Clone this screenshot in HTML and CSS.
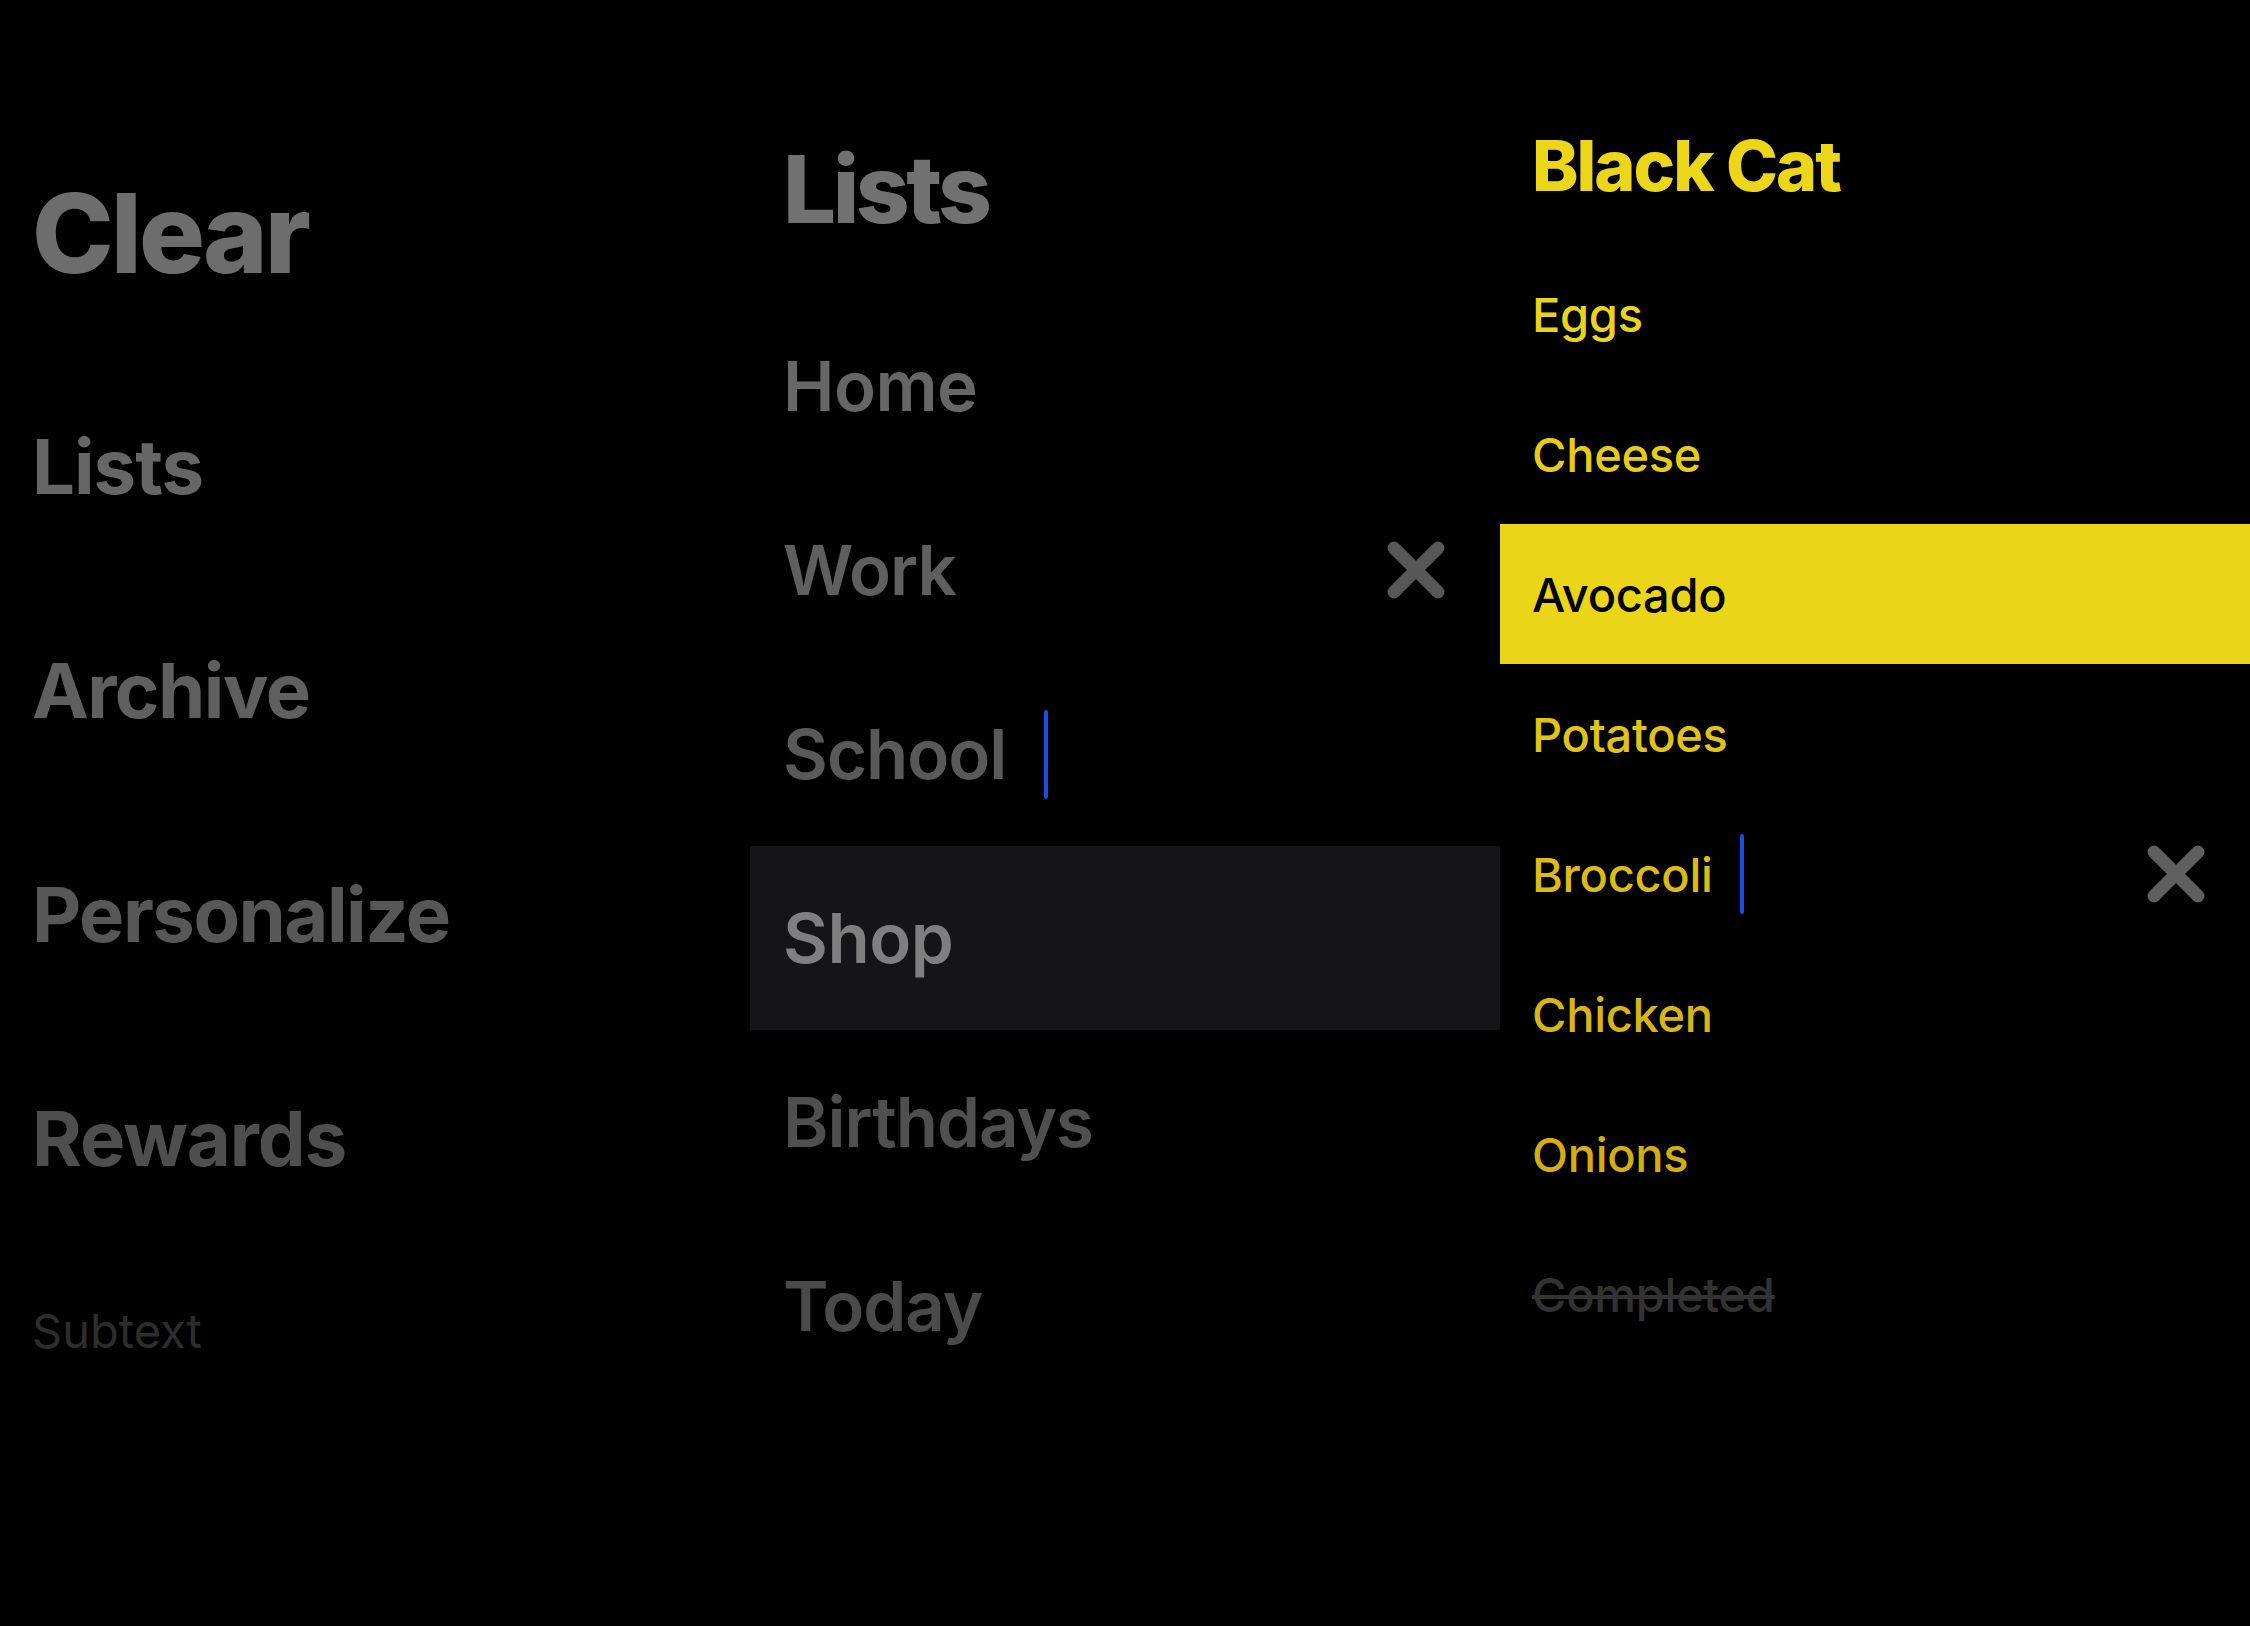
FILE: index.html
```html
<!DOCTYPE html>
<html lang="en">
<head>
    <meta charset="UTF-8">
    <meta name="viewport" content="width=device-width, initial-scale=1.0">
    <title>Clear</title>
    <link rel="stylesheet" href="styles.css">
</head>
<body>
    <div class="screens">
        <!-- main menu -->
        <section class="panel menu">
            <h1 class="app-title">Clear</h1>
            <ul class="menu-list">
                <li class="menu-item tone-1">Lists</li>
                <li class="menu-item tone-2">Archive</li>
                <li class="menu-item tone-3">Personalize</li>
                <li class="menu-item tone-4">Rewards</li>
            </ul>
            <p class="subtext">Subtext</p>
        </section>

        <!-- lists -->
        <section class="panel lists">
            <h2 class="lists-title">Lists</h2>
            <ul class="list-rows">
                <li class="list-row tone-1"><span class="label">Home</span></li>
                <li class="list-row tone-2">
                    <span class="label">Work</span>
                    <span class="close">
                        <svg width="58" height="58" viewBox="0 0 58 58"><path d="M7 7L51 51M51 7L7 51"/></svg>
                    </span>
                </li>
                <li class="list-row tone-3"><span class="label">School</span><span class="caret"></span></li>
                <li class="list-row active"><span class="label">Shop</span></li>
                <li class="list-row tone-4"><span class="label">Birthdays</span></li>
                <li class="list-row tone-5"><span class="label">Today</span></li>
            </ul>
        </section>

        <!-- items of one list -->
        <section class="panel items">
            <h2 class="items-title">Black Cat</h2>
            <ul class="item-rows">
                <li class="item-row y-1">Eggs</li>
                <li class="item-row y-2">Cheese</li>
                <li class="item-row selected">Avocado</li>
                <li class="item-row y-3">Potatoes</li>
                <li class="item-row y-4">
                    <span class="label">Broccoli</span><span class="caret"></span>
                    <span class="close">
                        <svg width="58" height="58" viewBox="0 0 58 58"><path d="M7 7L51 51M51 7L7 51"/></svg>
                    </span>
                </li>
                <li class="item-row y-5">Chicken</li>
                <li class="item-row y-6">Onions</li>
                <li class="item-row done">Completed</li>
            </ul>
        </section>
    </div>
</body>
</html>
```

FILE: styles.css
```css
body {
    margin: 0;
    padding: 0;
    background: #000;
    font-family: Inter, 'Noto Sans', sans-serif;
    color: #666;
}
ul {
    list-style: none;
    margin: 0;
    padding: 0;
}
h1, h2, p {
    margin: 0;
}
.screens {
    display: grid;
    grid-template-columns: 750px 750px 750px;
    height: 1626px;
}
.panel {
    display: flex;
    flex-direction: column;
}

/* column 1 */
.menu {
    padding-left: 32px;
}
.app-title {
    height: 242px;
    padding-top: 112px;
    display: flex;
    align-items: center;
    font-size: 110px;
    font-weight: 800;
    letter-spacing: -3px;
    color: #6d6d6d;
}
.menu-item {
    height: 224px;
    display: flex;
    align-items: center;
    font-size: 76px;
    font-weight: 700;
    letter-spacing: -1.5px;
}
.menu-item.tone-1 { color: #666666; letter-spacing: -1px; }
.menu-item.tone-2 { color: #5f5f5f; }
.menu-item.tone-3 { color: #575757; }
.menu-item.tone-4 { color: #4e4e4e; letter-spacing: -1px; }
.subtext {
    height: 160px;
    display: flex;
    align-items: center;
    font-size: 47px;
    font-weight: 400;
    color: #2e2c2c;
}

/* column 2 */
.lists-title {
    height: 210px;
    padding: 84px 0 0 33px;
    display: flex;
    align-items: center;
    font-size: 94px;
    font-weight: 800;
    letter-spacing: -3.5px;
    color: #717171;
}
.list-row {
    height: 184px;
    padding: 0 55px 0 33px;
    display: flex;
    align-items: center;
    font-size: 69px;
    font-weight: 600;
    letter-spacing: -1px;
}
.list-row.tone-1 { color: #666666; letter-spacing: -0.5px; }
.list-row.tone-2 { color: #5f5f5f; }
.list-row.tone-3 { color: #595959; }
.list-row.tone-4 { color: #4f4f4f; }
.list-row.tone-5 { color: #4a4a4a; }
.list-row.active {
    background: #151416;
    color: #7f7f7f;
    letter-spacing: -0.5px;
}
.list-row .caret {
    width: 4px;
    height: 89px;
    margin-left: 38px;
    border-radius: 2px;
    background: #1a4ce6;
}
.close {
    margin-left: auto;
    display: flex;
}
.close path {
    fill: none;
    stroke: #575757;
    stroke-width: 13;
    stroke-linecap: round;
}

/* column 3 */
.items-title {
    height: 157px;
    padding: 87px 0 0 32px;
    display: flex;
    align-items: center;
    font-size: 70px;
    font-weight: 800;
    letter-spacing: -2px;
    color: #ecd619;
}
.item-row {
    height: 140px;
    padding: 0 45px 0 32px;
    display: flex;
    align-items: center;
    font-size: 47px;
    font-weight: 500;
    letter-spacing: -0.3px;
}
.item-row.y-1 { color: #ead418; }
.item-row.y-2 { color: #e6cc17; }
.item-row.y-3 { color: #e1c315; }
.item-row.y-4 { color: #dcbc14; }
.item-row.y-5 { color: #d8b612; }
.item-row.y-6 { color: #d4ae10; }
.item-row.selected {
    background: #ebd518;
    color: #000;
}
.item-row.done {
    color: #333232;
    text-decoration: line-through;
    text-decoration-thickness: 4px;
}
.item-row .caret {
    width: 4px;
    height: 80px;
    margin-left: 28px;
    border-radius: 2px;
    background: #1a4ce6;
}
.item-row .close path {
    stroke: #5f5f5f;
}
```
